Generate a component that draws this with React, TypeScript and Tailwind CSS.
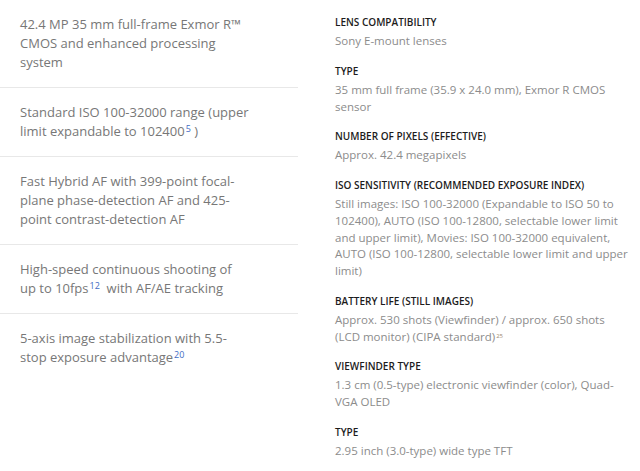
import React from "react";

type Feature = { text: string; sup?: string; tail?: string };

const features: Feature[] = [
  { text: "42.4 MP 35 mm full-frame Exmor R™ CMOS and enhanced processing system" },
  { text: "Standard ISO 100-32000 range (upper limit expandable to 102400", sup: "5", tail: " )" },
  { text: "Fast Hybrid AF with 399-point focal-plane phase-detection AF and 425-point contrast-detection AF" },
  { text: "High-speed continuous shooting of up to 10fps", sup: "12", tail: "  with AF/AE tracking" },
  { text: "5-axis image stabilization with 5.5-\u200Bstop exposure advantage", sup: "20" },
];

type Spec = { label: string; value: string; note?: string };

const specs: Spec[] = [
  { label: "Lens compatibility", value: "Sony E-mount lenses" },
  { label: "Type", value: "35 mm full frame (35.9 x 24.0 mm), Exmor R CMOS sensor" },
  { label: "Number of pixels (effective)", value: "Approx. 42.4 megapixels" },
  {
    label: "ISO sensitivity (recommended exposure index)",
    value:
      "Still images: ISO 100-32000 (Expandable to ISO 50 to 102400), AUTO (ISO 100-12800, selectable lower limit and upper limit), Movies: ISO 100-32000 equivalent, AUTO (ISO 100-12800, selectable lower limit and upper limit)",
  },
  {
    label: "Battery life (still images)",
    value: "Approx. 530 shots (Viewfinder) / approx. 650 shots (LCD monitor) (CIPA standard)",
    note: "25",
  },
  { label: "Viewfinder type", value: "1.3 cm (0.5-type) electronic viewfinder (color), Quad-VGA OLED" },
  { label: "Type", value: "2.95 inch (3.0-type) wide type TFT" },
];

export default function App() {
  return (
    <div
      className="w-[640px] h-[471px] bg-white flex overflow-hidden"
      style={{ fontFamily: '"Open Sans", "Noto Sans", sans-serif' }}
    >
      {/* key features */}
      <div className="w-[298px] shrink-0">
        {features.map((f, i) => (
          <div
            key={i}
            className={
              "px-[20px] py-[15px] " +
              (i < features.length - 1 ? "border-b border-[#e8e8e8]" : "")
            }
          >
            <p className="w-[230px] text-[13px] leading-[19px] text-[#777777] whitespace-pre-wrap">
              {f.text}
              {f.sup && (
                <sup className="text-[9px] text-[#3f6cc4] ml-[1px]">{f.sup}</sup>
              )}
              {f.tail}
            </p>
          </div>
        ))}
      </div>

      {/* specifications */}
      <div className="ml-[37px] w-[295px] pt-[14px] flex flex-col gap-[13px]">
        {specs.map((s, i) => (
          <div key={i}>
            <div className="text-[10px] leading-[16px] font-semibold uppercase text-[#1c1c1c] mb-[3px]">
              {s.label}
            </div>
            <div className="text-[11.5px] leading-[16.75px] text-[#8c8c8c]">
              {s.value}
              {s.note && <sup className="text-[6px] text-[#a08a70] ml-[1px]">{s.note}</sup>}
            </div>
          </div>
        ))}
      </div>
    </div>
  );
}
